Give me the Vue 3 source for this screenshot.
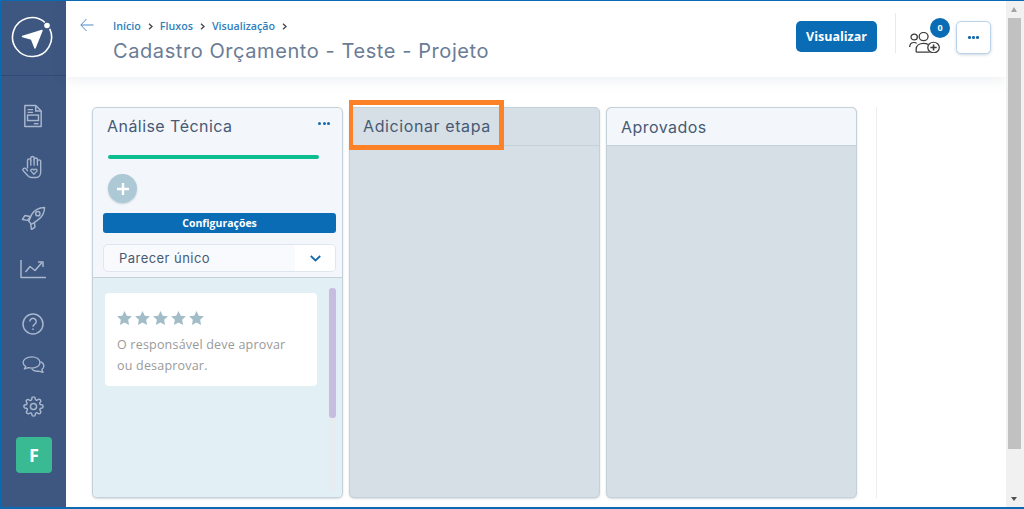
<script setup>
const crumbs = ['Início', 'Fluxos', 'Visualização']
const stars = [1, 2, 3, 4, 5]
</script>

<template>
  <div class="frame">
    <aside class="side">
      <div class="logo">
        <svg width="44" height="44" viewBox="0 0 44 44" fill="none">
          <path d="M39.700 13.750A19.500 19.500 0 1 1 34.800 7.300" stroke="#fff" stroke-width="1.600" />
          <circle cx="37" cy="10.500" r="2.800" fill="#fff" />
          <path d="M12.500 21.500 32 15.500 25 33 21.500 24Z" fill="#fff" stroke="#fff" stroke-width="1.500" stroke-linejoin="round" />
        </svg>
      </div>
      <nav class="nav">
        <svg class="i-doc" width="20" height="24" viewBox="0 0 22 26" fill="none" stroke="#a9b6cc" stroke-width="1.600">
          <path d="M2 1.500h12l6 6v17H2z" stroke-linejoin="round" /><path d="M14 1.500v6h6M5 6h6M5 9h6" />
          <rect x="5" y="12" width="12" height="6" /><path d="M12 21.500h5" />
        </svg>
        <svg class="i-hand" width="22" height="24" viewBox="0 0 24 26" fill="none" stroke="#a9b6cc" stroke-width="1.500" stroke-linecap="round" stroke-linejoin="round">
          <path d="M6 14V6a1.800 1.800 0 0 1 3.600 0V3.300a1.800 1.800 0 0 1 3.600 0V5a1.800 1.800 0 0 1 3.600 0V7a1.800 1.800 0 0 1 3.600 0V18c0 4-2 6.500-5 6.500h-5c-2 0-3-1-4-2l-5-5.500c-1.200-1.500.5-3.500 2.500-2.500L6 17" />
          <path d="M9.600 6v5M13.200 5v6M16.800 7v4" />
          <path d="M13 21 9.800 17.500c-1-1.500 1.500-3.200 3.200-1.300 1.700-1.900 4.200-.2 3.200 1.300z" />
        </svg>
        <svg class="i-rocket" width="25" height="25" viewBox="0 0 26 26" fill="none" stroke="#a9b6cc" stroke-width="1.500" stroke-linejoin="round">
          <path d="M8 17 11 10C14 5 19 2.500 24.500 2.500 24.500 8 22 12.500 17 16l-6 4z" />
          <circle cx="17.500" cy="9" r="2.200" /><path d="M9.500 12 4 11 1.500 15l5.500 1zM14 18l.5 5-3.500 2.500-1-5.500" />
        </svg>
        <svg class="i-chart" width="26" height="19" viewBox="0 0 26 19" fill="none" stroke="#a9b6cc" stroke-width="1.500" stroke-linejoin="round">
          <path d="M1 0v17.500h25" /><path d="M5.500 12 10 6.500l5 4 7-8" /><path d="M18 2h5v5" />
        </svg>
        <svg class="i-help" width="22" height="22" viewBox="0 0 22 22" fill="none" stroke="#a9b6cc" stroke-width="1.500">
          <circle cx="11" cy="11" r="10" /><path d="M7.800 8.500a3.200 3.200 0 1 1 4.800 2.800c-1 .6-1.600 1.200-1.600 2.400" /><path d="M11 15.500v1.500" />
        </svg>
        <svg class="i-chat" width="25" height="19" viewBox="0 0 26 22" fill="none" stroke="#a9b6cc" stroke-width="1.600" stroke-linejoin="round">
          <path d="M11 1C5.500 1 1 3.800 1 7.500c0 2 1.200 3.600 3 4.800L2.500 15l4.500-1.500c1.300.3 2.600.5 4 .5 5.500 0 9.500-2.800 9.500-6.500S16.500 1 11 1z" />
          <path d="M21 6.500c2.500 1 4 2.800 4 5 0 1.800-1 3.200-2.500 4.200l1.500 3.300-5-1.500c-3 .5-6.500-.5-8-2.500" />
        </svg>
        <svg class="i-gear" width="21" height="21" viewBox="0 0 24 24" fill="none" stroke="#a9b6cc" stroke-width="1.700" stroke-linejoin="round">
          <circle cx="12" cy="12" r="3.500" />
          <path d="M19.400 15a1.650 1.650 0 0 0 .33 1.820l.06.06a2 2 0 1 1-2.830 2.830l-.06-.06a1.650 1.650 0 0 0-2.800 1.170V21a2 2 0 0 1-4 0v-.09A1.650 1.650 0 0 0 7.400 19.700l-.06.06a2 2 0 1 1-2.830-2.830l.06-.06A1.650 1.650 0 0 0 3.400 14H3a2 2 0 0 1 0-4h.09A1.650 1.650 0 0 0 4.300 7.400l-.06-.06a2 2 0 1 1 2.830-2.830l.06.06A1.650 1.650 0 0 0 10 3.400V3a2 2 0 0 1 4 0v.09a1.650 1.650 0 0 0 2.800 1.170l.06-.06a2 2 0 1 1 2.830 2.830l-.06.06A1.650 1.650 0 0 0 20.600 10H21a2 2 0 0 1 0 4h-.09a1.650 1.650 0 0 0-1.510 1z" />
        </svg>
        <div class="avatar">F</div>
      </nav>
    </aside>

    <main class="main">
      <header class="head">
        <svg class="back" width="14" height="14" viewBox="0 0 14 14" fill="none" stroke="#4d8ac4" stroke-width="1">
          <path d="M13.500 7H1M6.500 1 .8 7l5.700 6" />
        </svg>
        <div class="titles">
          <div class="crumbs">
            <template v-for="c in crumbs" :key="c">
              <span class="crumb">{{ c }}</span>
              <svg width="5" height="7" viewBox="0 0 5 7" fill="none" stroke="#444" stroke-width="1.300"><path d="M1 .8 4 3.500 1 6.200" /></svg>
            </template>
          </div>
          <h1 class="title">Cadastro Orçamento - Teste - Projeto</h1>
        </div>
        <button class="view">Visualizar</button>
        <div class="rule"></div>
        <div class="people">
          <svg width="31" height="21" viewBox="0.300 0 31.200 23" preserveAspectRatio="none" fill="none" stroke="#3c3c3c" stroke-width="1.300">
            <circle cx="5.500" cy="5.500" r="3.200" /><circle cx="15" cy="5" r="4.500" />
            <path d="M1 16.500c0-3 1.500-5 4.500-5 1 0 2 .3 2.500 1" />
            <path d="M7.500 22v-3c0-4 3-6.500 7.500-6.500 2 0 3.500.5 4.500 1.200M7.500 22H21" />
            <circle cx="25" cy="17" r="5.800" /><path d="M25 13.800v6.400M21.800 17h6.400" stroke-width="1.600" />
          </svg>
          <span class="badge">0</span>
        </div>
        <button class="more"><span></span><span></span><span></span></button>
      </header>

      <section class="board">
        <article class="col first">
          <div class="col-head">
            <h2>Análise Técnica</h2>
            <div class="dots"><span></span><span></span><span></span></div>
          </div>
          <div class="settings">
            <div class="progress"></div>
            <div class="add">
              <svg width="12" height="12" viewBox="0 0 12 12" stroke="#fff" stroke-width="2.400"><path d="M6 0v12M0 6h12" /></svg>
            </div>
            <button class="config">Configurações</button>
            <div class="select">
              <span class="select-text">Parecer único</span>
              <span class="select-arrow">
                <svg width="11" height="7" viewBox="0 0 11 7" fill="none" stroke="#1769ae" stroke-width="1.800"><path d="M.8 1 5.500 5.500 10.200 1" /></svg>
              </span>
            </div>
          </div>
          <div class="cards">
            <div class="card">
              <div class="stars">
                <svg v-for="s in stars" :key="s" width="15" height="14" viewBox="0 0 16 15" fill="#a2bcc8">
                  <path d="M8 0l2.400 5 5.500.7-4 3.800 1 5.500L8 12.300 3.100 15l1-5.500-4-3.800L5.600 5z" />
                </svg>
              </div>
              <p>O responsável deve aprovar ou desaprovar.</p>
            </div>
            <div class="track"><div class="thumb"></div></div>
          </div>
        </article>

        <article class="col">
          <div class="col-head plain"><h2>Adicionar etapa</h2></div>
          <div class="highlight"></div>
        </article>

        <article class="col">
          <div class="col-head light"><h2>Aprovados</h2></div>
        </article>

        <div class="end-line"></div>
      </section>
    </main>

    <div class="scrollbar">
      <i class="up"></i>
      <div class="bar"></div>
      <i class="down"></i>
    </div>
  </div>
</template>

<style scoped>
.frame { width: 1024px; height: 509px; box-sizing: border-box; display: flex; overflow: hidden; border: solid #0c6ab3; border-width: 1px 0 2px 1px; background: #fff; font-family: "Open Sans", sans-serif; }
.side { width: 65px; flex: none; background: #3d5780; display: flex; flex-direction: column; }
.logo { height: 75px; flex: none; border-bottom: 1px solid #2f4a74; display: flex; align-items: center; box-sizing: border-box; padding: 0 0 2px 9px; }
.nav { display: flex; flex-direction: column; align-items: center; padding-right: 1px; }
.i-doc { margin-top: 28px; }
.i-hand { margin-top: 27px; }
.i-rocket { margin-top: 26px; }
.i-chart { margin-top: 30px; }
.i-help { margin-top: 34px; }
.i-chat { margin-top: 21px; }
.i-gear { margin-top: 21px; }
.avatar { width: 36px; height: 36px; margin: 20px 0 0 2px; border-radius: 4px; background: #3aba93; color: #fff; font: 700 18px/36px "Open Sans", sans-serif; text-align: center; }
.main { width: 940px; flex: none; display: flex; flex-direction: column; }
.head { height: 76px; flex: none; box-sizing: border-box; display: flex; align-items: flex-start; padding: 0 15px 0 14px; box-shadow: 0 2px 14px rgba(60, 80, 110, .1); background: #fff; position: relative; }
.back { margin-top: 17px; flex: none; }
.titles { margin-left: 19px; flex: 1; }
.crumbs { display: flex; align-items: center; gap: 7px; margin-top: 18px; height: 14px; }
.crumb { font: 600 10.700px/14px "Open Sans", sans-serif; color: #2f7fbd; }
.title { margin: 4px 0 0; font: 400 20px/28px Inter, sans-serif; letter-spacing: .58px; color: #6b7c96; }
.view { margin-top: 20px; width: 81px; height: 31px; border: 0; border-radius: 5px; background: #0a6cb5; color: #fff; font: 700 12.500px/31px "Open Sans", sans-serif; padding: 0; }
.rule { width: 1px; height: 40px; background: #e7e9ec; margin: 12px 0 0 18px; }
.people { position: relative; width: 48px; height: 50px; margin-left: 12px; }
.people svg { position: absolute; left: 1px; top: 31px; }
.badge { position: absolute; left: 22px; top: 17px; width: 20px; height: 20px; border-radius: 50%; background: #0a6cb5; color: #fff; font: 700 9px/20px "Open Sans", sans-serif; text-align: center; }
.more { margin-top: 20px; width: 35px; height: 33px; box-sizing: border-box; border: 1px solid #b9d4ea; border-radius: 5px; background: #fff; box-shadow: 0 1px 3px rgba(60, 90, 130, .25); display: flex; align-items: center; justify-content: center; gap: 1.500px; padding: 0; }
.more span { width: 2.500px; height: 2.500px; border-radius: 50%; background: #1769ae; }
.dots span { width: 3px; height: 3px; border-radius: 50%; background: #1769ae; }
.board { flex: 1; display: flex; align-items: stretch; gap: 6px; padding: 30px 0 9px 26px; min-height: 0; }
.col { width: 251px; flex: none; box-sizing: border-box; background: #d6dfe6; border: 1px solid #c5d1d9; border-radius: 5px; box-shadow: 0 1px 2px rgba(90, 110, 130, .25); display: flex; flex-direction: column; position: relative; }
.col-head { height: 38px; box-sizing: border-box; padding: 0 14px; flex: none; display: flex; align-items: center; justify-content: space-between; border-bottom: 1px solid #c5d1d9; border-radius: 5px 5px 0 0; }
.col-head h2 { margin: 0; font: 400 16px/20px Inter, sans-serif; letter-spacing: .45px; color: #475a74; }
.col-head.plain { padding: 0 13px 2px; }
.col-head.plain h2 { letter-spacing: .6px; }
.col-head.light { background: #f3f7fb; }
.first { background: #f3f7fb; }
.first .col-head { border-bottom: 0; height: 37px; padding: 0 12px 2px 14px; }
.dots { display: flex; gap: 1.500px; margin-top: -5px; }
.settings { padding: 10px 6px 0 10px; height: 133px; box-sizing: border-box; flex: none; border-bottom: 1px solid #c5d1d9; display: flex; flex-direction: column; }
.progress { width: 211px; height: 4px; margin-left: 5px; border-radius: 2px; background: #0cbd90; flex: none; }
.add { width: 29px; height: 29px; margin: 15px 0 0 5px; border-radius: 50%; background: #aec9d6; box-shadow: 0 1px 2px rgba(70, 90, 110, .25); display: flex; align-items: center; justify-content: center; flex: none; }
.config { margin: 10px 0 0; width: 233px; height: 20px; border: 0; border-radius: 3px; background: #0a6cb5; color: #fff; font: 700 10.500px/20px "Open Sans", sans-serif; padding: 0; flex: none; }
.select { margin-top: 11px; width: 233px; height: 28px; box-sizing: border-box; border: 1px solid #dfe6f0; border-radius: 5px; background: #f8fafd; display: flex; align-items: center; flex: none; overflow: hidden; }
.select-text { flex: 1; padding-left: 15px; font: 400 13px/26px Inter, sans-serif; letter-spacing: .45px; color: #475a74; }
.select-arrow { width: 40px; height: 26px; background: #fff; display: flex; align-items: center; justify-content: center; }
.cards { flex: 1; min-height: 0; background: #e2eff4; border-radius: 0 0 5px 5px; padding: 15px 0 0 12px; position: relative; }
.card { width: 212px; height: 93px; box-sizing: border-box; background: #fff; border-radius: 4px; padding: 18px 22px 0 12px; }
.stars { display: flex; gap: 3px; height: 15px; }
.card p { margin: 8px 0 0; font: 400 12.500px/21px "Open Sans", sans-serif; letter-spacing: .2px; color: #9a9a9a; }
.track { position: absolute; right: 6px; top: 10px; bottom: 6px; width: 7px; background: #e6ecef; border-radius: 3px; }
.thumb { height: 130px; border-radius: 3px; background: #c7bde0; }
.highlight { position: absolute; left: -1px; top: -8px; width: 155px; height: 50px; box-sizing: border-box; border: 5px solid #fd8127; border-left-width: 4px; }
.end-line { width: 1px; margin: 0 0 0 13px; background: #ebedef; }
.scrollbar { width: 18px; flex: none; background: #f1f1f1; display: flex; flex-direction: column; align-items: flex-start; position: relative; padding: 17px 0 0 2px; box-sizing: border-box; }
.bar { width: 13px; height: 431px; background: #c1c1c1; }
.up, .down { position: absolute; left: 5px; width: 0; height: 0; border-left: 3.500px solid transparent; border-right: 3.500px solid transparent; }
.up { top: 6px; border-bottom: 5px solid #a3a3a3; }
.down { bottom: 6px; border-top: 4px solid #505050; }
</style>
